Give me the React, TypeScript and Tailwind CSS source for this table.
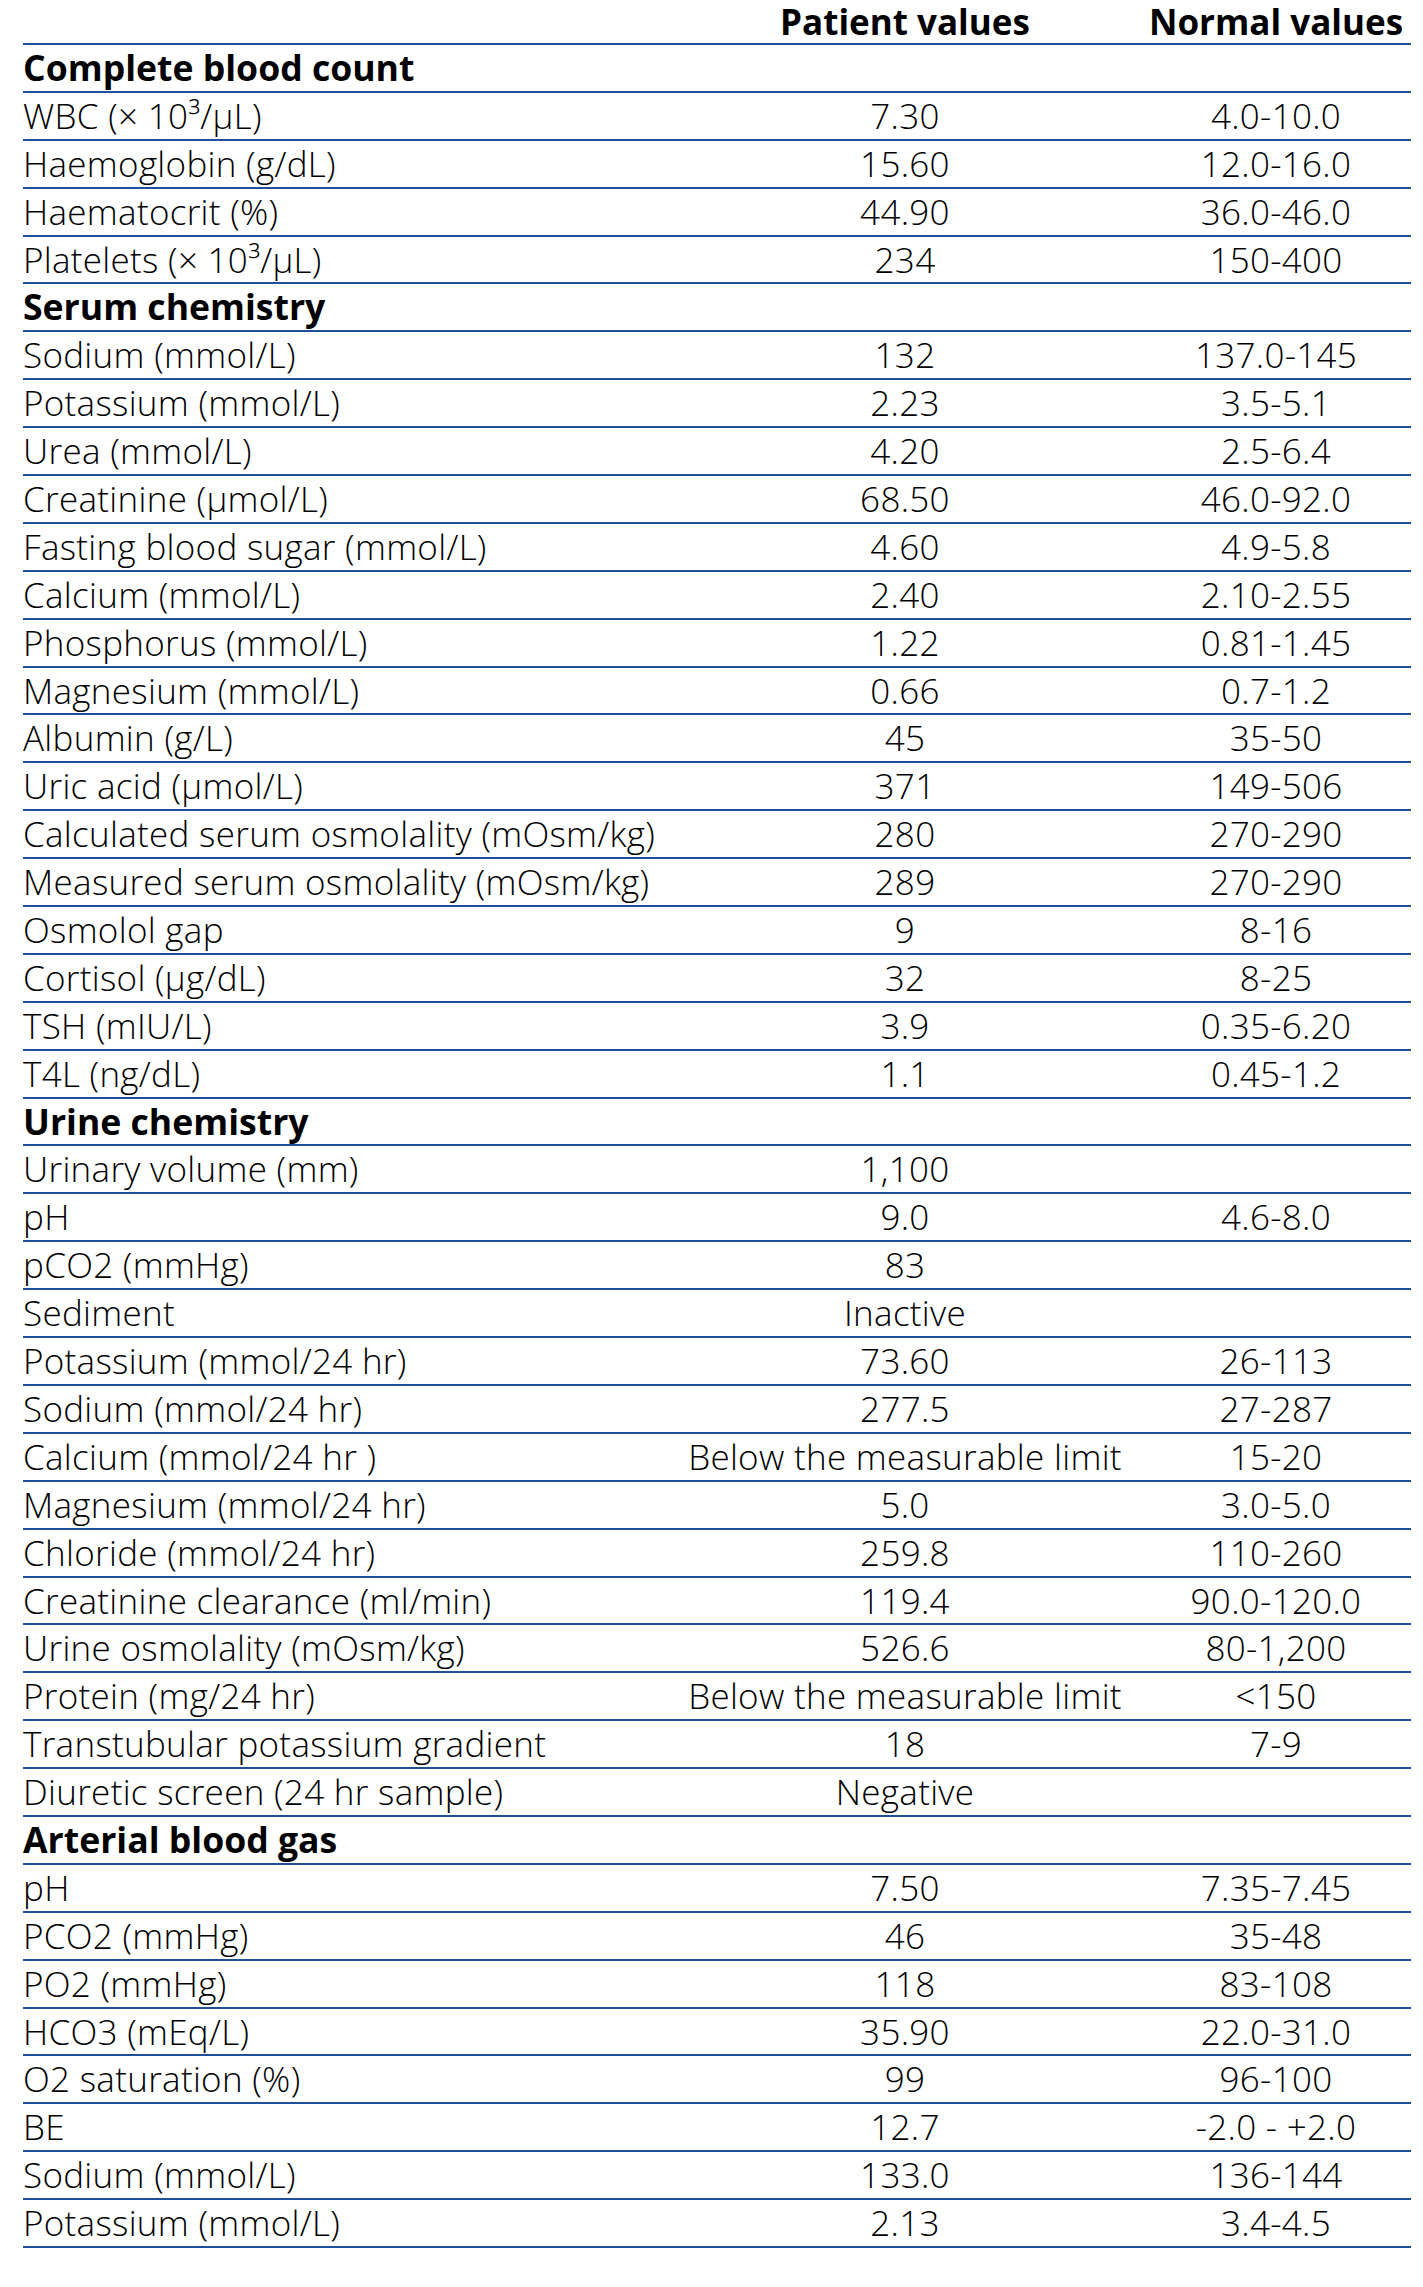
type Row = { label: string; value?: string; normal?: string; section?: boolean };

const rows: Row[] = [
  { label: "Complete blood count", section: true },
  { label: "WBC (× 10³/µL)", value: "7.30", normal: "4.0-10.0" },
  { label: "Haemoglobin (g/dL)", value: "15.60", normal: "12.0-16.0" },
  { label: "Haematocrit (%)", value: "44.90", normal: "36.0-46.0" },
  { label: "Platelets (× 10³/µL)", value: "234", normal: "150-400" },
  { label: "Serum chemistry", section: true },
  { label: "Sodium (mmol/L)", value: "132", normal: "137.0-145" },
  { label: "Potassium (mmol/L)", value: "2.23", normal: "3.5-5.1" },
  { label: "Urea (mmol/L)", value: "4.20", normal: "2.5-6.4" },
  { label: "Creatinine (µmol/L)", value: "68.50", normal: "46.0-92.0" },
  { label: "Fasting blood sugar (mmol/L)", value: "4.60", normal: "4.9-5.8" },
  { label: "Calcium (mmol/L)", value: "2.40", normal: "2.10-2.55" },
  { label: "Phosphorus (mmol/L)", value: "1.22", normal: "0.81-1.45" },
  { label: "Magnesium (mmol/L)", value: "0.66", normal: "0.7-1.2" },
  { label: "Albumin (g/L)", value: "45", normal: "35-50" },
  { label: "Uric acid (µmol/L)", value: "371", normal: "149-506" },
  { label: "Calculated serum osmolality (mOsm/kg)", value: "280", normal: "270-290" },
  { label: "Measured serum osmolality (mOsm/kg)", value: "289", normal: "270-290" },
  { label: "Osmolol gap", value: "9", normal: "8-16" },
  { label: "Cortisol (µg/dL)", value: "32", normal: "8-25" },
  { label: "TSH (mIU/L)", value: "3.9", normal: "0.35-6.20" },
  { label: "T4L (ng/dL)", value: "1.1", normal: "0.45-1.2" },
  { label: "Urine chemistry", section: true },
  { label: "Urinary volume (mm)", value: "1,100", normal: "" },
  { label: "pH", value: "9.0", normal: "4.6-8.0" },
  { label: "pCO2 (mmHg)", value: "83", normal: "" },
  { label: "Sediment", value: "Inactive", normal: "" },
  { label: "Potassium (mmol/24 hr)", value: "73.60", normal: "26-113" },
  { label: "Sodium (mmol/24 hr)", value: "277.5", normal: "27-287" },
  { label: "Calcium (mmol/24 hr )", value: "Below the measurable limit", normal: "15-20" },
  { label: "Magnesium (mmol/24 hr)", value: "5.0", normal: "3.0-5.0" },
  { label: "Chloride (mmol/24 hr)", value: "259.8", normal: "110-260" },
  { label: "Creatinine clearance (ml/min)", value: "119.4", normal: "90.0-120.0" },
  { label: "Urine osmolality (mOsm/kg)", value: "526.6", normal: "80-1,200" },
  { label: "Protein (mg/24 hr)", value: "Below the measurable limit", normal: "<150" },
  { label: "Transtubular potassium gradient", value: "18", normal: "7-9" },
  { label: "Diuretic screen (24 hr sample)", value: "Negative", normal: "" },
  { label: "Arterial blood gas", section: true },
  { label: "pH", value: "7.50", normal: "7.35-7.45" },
  { label: "PCO2 (mmHg)", value: "46", normal: "35-48" },
  { label: "PO2 (mmHg)", value: "118", normal: "83-108" },
  { label: "HCO3 (mEq/L)", value: "35.90", normal: "22.0-31.0" },
  { label: "O2 saturation (%)", value: "99", normal: "96-100" },
  { label: "BE", value: "12.7", normal: "-2.0 - +2.0" },
  { label: "Sodium (mmol/L)", value: "133.0", normal: "136-144" },
  { label: "Potassium (mmol/L)", value: "2.13", normal: "3.4-4.5" },
];

export default function App() {
  return (
    <div className="min-h-screen bg-white pl-[23px] pr-[12px] font-['Open_Sans',sans-serif] text-black">
      <div className="grid grid-cols-[646px_472px_270px] h-[45px] border-b-2 border-[#1f4f9a] text-[35px] font-bold leading-[43px]">
        <div />
        <div className="text-center whitespace-nowrap">Patient values</div>
        <div className="text-center whitespace-nowrap">Normal values</div>
      </div>
      {rows.map((r, i) =>
        r.section ? (
          <div
            key={i}
            className="h-[47.9px] border-b-2 border-[#1f4f9a] text-[35.6px] font-bold leading-[45.9px] whitespace-nowrap"
          >
            {r.label}
          </div>
        ) : (
          <div
            key={i}
            className="grid grid-cols-[646px_472px_270px] h-[47.9px] border-b-2 border-[#1f4f9a] text-[35px] font-light leading-[45.9px] tracking-[0.3px]"
          >
            <div className="whitespace-nowrap">{r.label}</div>
            <div className="text-center whitespace-nowrap">{r.value}</div>
            <div className="text-center whitespace-nowrap">{r.normal}</div>
          </div>
        )
      )}
    </div>
  );
}
